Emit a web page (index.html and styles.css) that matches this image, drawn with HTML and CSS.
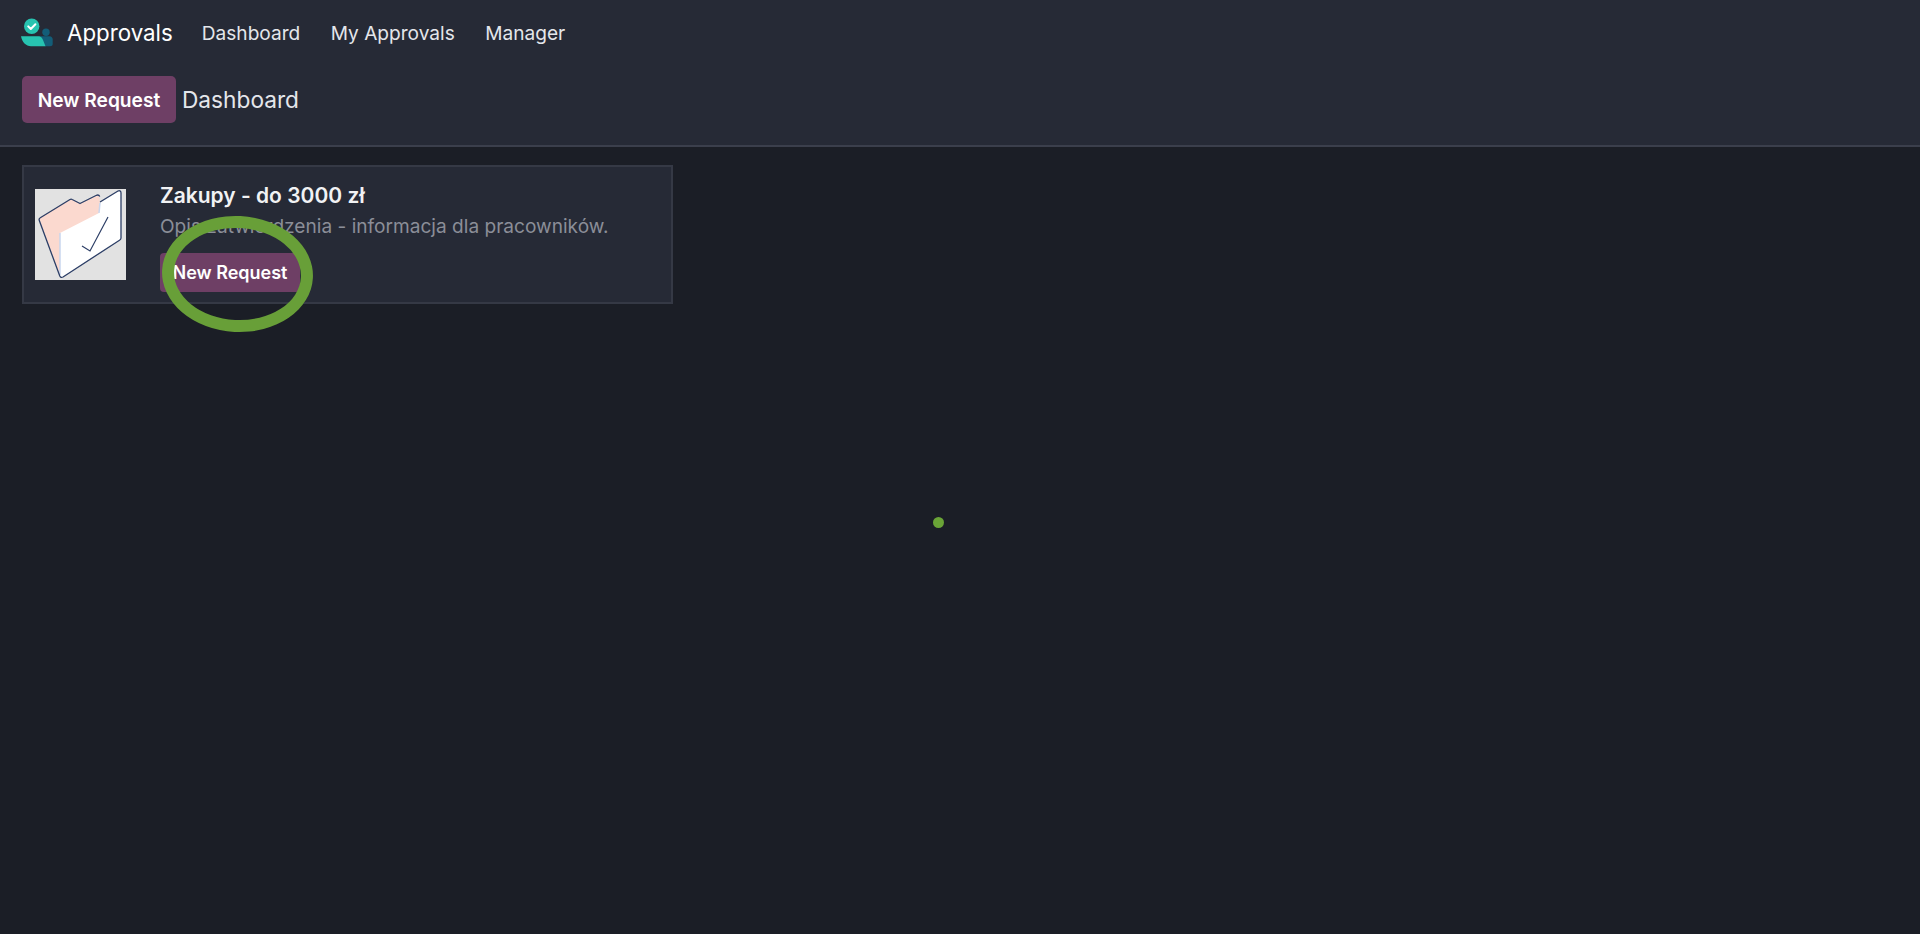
FILE: index.html
```html
<!DOCTYPE html>
<html lang="pl">
<head>
<meta charset="utf-8">
<title>Approvals</title>
<link rel="stylesheet" href="styles.css">
</head>
<body>
<header class="topbar">
  <nav class="nav">
    <svg class="logo" width="32" height="32" viewBox="0 0 32 32" aria-hidden="true">
      <circle cx="10.700" cy="9.200" r="7.700" fill="#27c3b0"/>
      <path d="M7.200 9.400l2.600 2.600 4.600-4.800" fill="none" stroke="#fff" stroke-width="2" stroke-linecap="round" stroke-linejoin="round"/>
      <circle cx="25" cy="15.200" r="3.700" fill="#135d78"/>
      <path d="M17 19.200H28.500C30.500 19.200 31.700 20.500 31.700 22.500V27C31.700 28.500 30.500 29.200 29 29.200H24z" fill="#135d78"/>
      <path d="M0 19.200H17C20 19.200 21 20.500 22 23L24.500 29.200H10C5 29.200 1 25 0 19.200z" fill="#27c3b0"/>
    </svg>
    <a class="brand" href="#">Approvals</a>
    <a class="nav-link" href="#">Dashboard</a>
    <a class="nav-link" href="#">My Approvals</a>
    <a class="nav-link" href="#">Manager</a>
  </nav>
  <div class="control">
    <button class="btn btn-main">New Request</button>
    <span class="crumb">Dashboard</span>
  </div>
</header>
<main class="content">
  <section class="card">
    <div class="thumb">
      <svg width="91" height="90" viewBox="0 0 91 90" aria-hidden="true">
        <path d="M4 29 36 10 45 14 64 6 66 24 25 46V86z" fill="#fbd9cf"/>
        <path d="M25 44 64 24 65 14 83 2c2-.8 3 .4 3 2V49c0 1-.5 1.600-1.500 2.200L28 88c-1.200.6-2 .2-3-1z" fill="#fff"/>
        <path d="M25 44V86M64 24 65 14" fill="none" stroke="#c9d6ee" stroke-width="1.500"/>
        <path d="M65 13 83 2c2-.8 3 .4 3 2V49c0 1-.5 1.600-1.500 2.200L28 88c-1.600.8-2.600.4-3.300-1.200L4.300 31.500c-.5-1.200-.2-2 1-2.700L35 10.500c.8-.5 1.400-.5 2.200 0L45 14.500 61 6.500c1.600-.8 3-.6 3.800 1" fill="none" stroke="#2c3e66" stroke-width="1.300" stroke-linejoin="round"/>
        <path d="M47 57l8 5 18-34" fill="none" stroke="#2c3e66" stroke-width="1.200"/>
      </svg>
    </div>
    <div class="card-body">
      <h2 class="card-title">Zakupy - do 3000 zł</h2>
      <p class="card-text">Opis zatwierdzenia - informacja dla pracowników.</p>
      <button class="btn btn-small">New Request</button>
    </div>
  </section>
</main>
<div class="click-ring"></div>
<div class="cursor-dot"></div>
</body>
</html>
```
FILE: styles.css
```css
* { box-sizing: border-box; }
html, body { height: 100%; }
body {
  margin: 0;
  background: #1b1e26;
  color: #fff;
  font-family: Inter, "Noto Sans", "Liberation Sans", sans-serif;
  overflow: hidden;
}
.topbar {
  height: 147px;
  background: #262a36;
  border-bottom: 2px solid #3b3f4c;
  padding: 0 22px;
}
.nav {
  height: 65px;
  display: flex;
  align-items: center;
}
.logo { margin: 0 14px 0 -1px; flex: none; }
.brand {
  color: #fff;
  font-size: 22.300px;
  text-decoration: none;
  margin-right: 29px;
}
.nav-link {
  color: #e4e6eb;
  font-size: 19.100px;
  text-decoration: none;
  margin-right: 30.500px;
}
.control {
  display: flex;
  align-items: center;
  margin-top: 11px;
}
.btn {
  border: 0;
  color: #fff;
  background: #6e3f65;
  font-family: inherit;
  font-weight: 600;
  padding: 0;
}
.btn-main {
  width: 154px;
  height: 47px;
  border-radius: 5px;
  font-size: 19.200px;
}
.crumb {
  color: #e4e6eb;
  font-size: 22.700px;
  margin-left: 6px;
}
.content { padding: 18px 22px; }
.card {
  width: 651px;
  height: 139px;
  display: flex;
  background: #262a36;
  border: 2px solid #353945;
  padding: 22px 11px;
}
.thumb {
  width: 91px;
  height: 91px;
  background: #e2e2e2;
  flex: none;
  line-height: 0;
}
.card-body {
  margin-left: 34px;
  margin-top: -9px;
}
.card-title {
  margin: 0;
  font-size: 21px;
  line-height: 31px;
  font-weight: 600;
  color: #f1f2f4;
}
.card-text {
  margin: 0;
  font-size: 19.100px;
  line-height: 30px;
  color: #8b8e98;
}
.btn-small {
  display: block;
  margin-top: 12px;
  width: 140px;
  height: 39px;
  border-radius: 4px;
  font-size: 18px;
}
.click-ring {
  position: absolute;
  left: 162px;
  top: 216px;
  width: 151px;
  height: 116px;
  border: 12px solid #689f38;
  border-radius: 50%;
  transform: rotate(3deg);
}
.cursor-dot {
  position: absolute;
  left: 933px;
  top: 517px;
  width: 11px;
  height: 11px;
  border-radius: 50%;
  background: #6aa437;
}
```
